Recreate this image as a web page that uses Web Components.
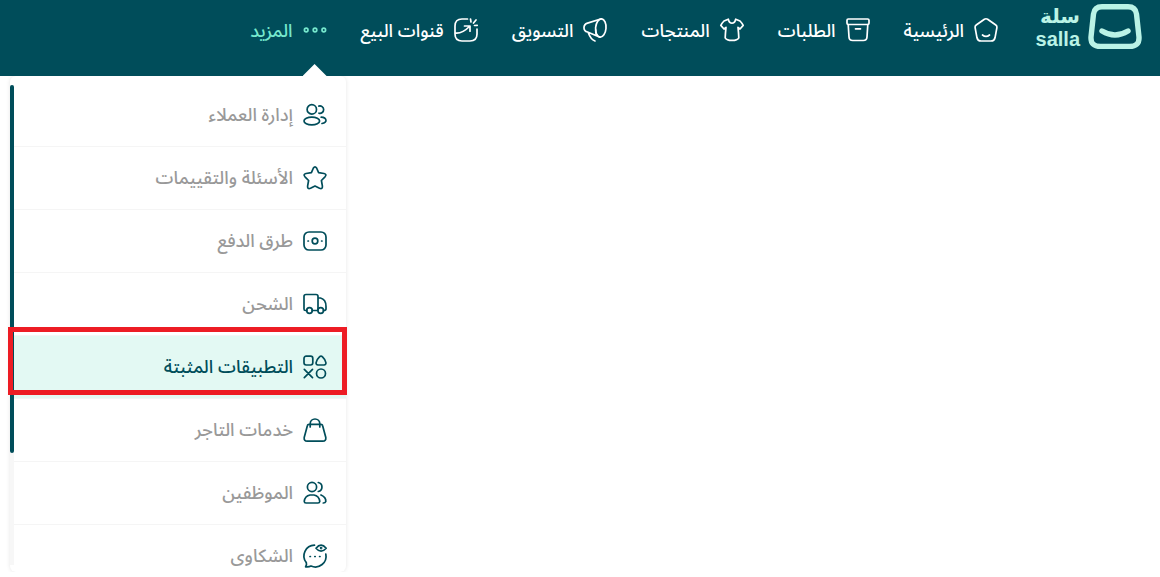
<!DOCTYPE html>
<html lang="ar" dir="rtl">
<head>
<meta charset="UTF-8">
<meta name="viewport" content="width=device-width, initial-scale=1">
<title>سلة</title>
<style>
  :root {
    --teal: #004d5a;
    --mint: #baf3e6;
    --accent: #76e8cd;
    --muted: #999;
    --active-bg: #e3f9f3;
    --line: #f5f5f5;
    --mark: #ed1c24;
  }
  body {
    margin: 0;
    background: #fff;
    font-family: "Noto Sans Arabic", "DejaVu Sans", sans-serif;
    font-size: 18px;
    font-weight: 500;
    line-height: 24px;
  }
</style>
</head>
<body>
<top-bar>
  <salla-logo slot="logo"></salla-logo>
  <nav-link icon="home">الرئيسية</nav-link>
  <nav-link icon="box">الطلبات</nav-link>
  <nav-link icon="shirt">المنتجات</nav-link>
  <nav-link icon="megaphone">التسويق</nav-link>
  <nav-link icon="channels">قنوات البيع</nav-link>
  <nav-link icon="more" active>المزيد</nav-link>
</top-bar>
<more-menu>
  <menu-item icon="customers">إدارة العملاء</menu-item>
  <menu-item icon="star">الأسئلة والتقييمات</menu-item>
  <menu-item icon="payment">طرق الدفع</menu-item>
  <menu-item icon="truck">الشحن</menu-item>
  <menu-item icon="apps" active>التطبيقات المثبتة</menu-item>
  <menu-item icon="bag">خدمات التاجر</menu-item>
  <menu-item icon="staff">الموظفين</menu-item>
  <menu-item icon="complaints">الشكاوى</menu-item>
</more-menu>

<script>
const ICONS = {
  home: '<path d="M10.4 1.2Q12 .3 13.6 1.2L21.8 7Q23.2 8 22.9 9.7L21 19.8Q20.3 23 17 23H7Q3.7 23 3 19.8L1.1 9.7Q.8 8 2.2 7Z"/><path d="M8.5 17Q12 19.8 15.5 17"/>',
  box: '<rect x="1" y="1" width="22" height="5.5" rx="1.3"/><path d="M2.2 6.5 3 19Q3.2 22.5 6.7 22.5H17.3Q20.8 22.5 21 19L21.8 6.5M9.5 10.8H14.5"/>',
  shirt: '<path d="M8.3 1.2Q9.3 5.2 12 5.2T15.7 1.2L20 3Q22 5 23.2 7.4L20 11 18 9.4Q18.6 15 18.8 19.8 17.5 22.4 12 22.4T5.2 19.8Q5.4 15 6 9.4L4 11 .8 7.4Q2 5 4 3Z"/>',
  megaphone: '<ellipse cx="17.8" cy="10" rx="5.2" ry="9.2" transform="rotate(5 17.8 10)"/><path d="M18.5 .8 4.5 5.1C-.2 6.7-.2 12.6 4.5 14L17 19.2M12.8 12Q12.3 14.5 14 17.5M5.2 14.5Q7.7 21.5 12 23"/>',
  channels: '<path d="M13.5 1H8Q1 1 1 8V16Q1 23 8 23H16Q23 23 23 16V11M1 15C7 15.8 11.5 12.5 15.4 8.5M10.5 8H16V13.2M16.5 1 17 4M22 2 19.5 5M23.2 7.3 20.5 7.5"/>',
  more: '<circle cx="3.2" cy="12" r="1.8"/><circle cx="12" cy="12" r="1.8"/><circle cx="20.8" cy="12" r="1.8"/>',
  customers: '<circle cx="8.8" cy="6.4" r="4.7"/><ellipse cx="8.8" cy="18" rx="7.8" ry="3.9"/><path d="M15.8 3.1A3.7 3.7 0 1 1 16 10.2M18.2 14.2C23.8 14.5 25 19.6 19 20.5"/>',
  star: '<path d="M10.4 2Q12 -.4 13.6 2L15.6 6.7 21 7.5Q24.2 8.4 22 10.8L18.4 14.5 19.4 20.2Q19.6 23.6 16.5 22.3L12 20 7.5 22.3Q4.4 23.6 4.6 20.2L5.6 14.5 2 10.8Q-.2 8.4 3 7.5L8.4 6.7Z"/>',
  payment: '<rect x="1" y="3" width="22" height="18" rx="5"/><circle cx="12" cy="12" r="2.8"/><path d="M5 12H5.4M18.6 12H19"/>',
  truck: '<path d="M3.8 18.5H2.5Q1 18.5 1 17V4.5Q1 2.5 3 2.5H13Q15 2.5 15 4.5V17M9.2 18.5H14.8M15 6H17.5C21.5 7 23 10 23 14.5V17Q23 18.5 20.5 18.5"/><circle cx="6.5" cy="18.5" r="2.8"/><circle cx="17.7" cy="18.5" r="2.8"/>',
  apps: '<rect x="1" y="1.2" width="8.8" height="8.8" rx="2.2"/><path d="M16.7 1.7Q18 .4 19.3 1.7 22 4.2 22.9 7.6 23.2 9.8 21 10H15Q12.8 9.8 13.1 7.6 14 4.2 16.7 1.7ZM1.3 14.4 9.5 22.6M9.5 14.4 1.3 22.6"/><circle cx="18" cy="18.5" r="4.5"/>',
  bag: '<path d="M4.5 7.2Q4.7 6.3 6 6.3H18Q19.3 6.3 19.5 7.2L22.8 19.5Q23.2 23 19.8 23.2H4.2Q.8 23 1.2 19.5ZM7.2 9V5.8A4.8 4.8 0 0 1 16.8 5.8V9"/>',
  staff: '<circle cx="9" cy="6" r="4.6"/><path d="M7 14H11Q16 15 16.8 20.3 16.5 22 15 22H3Q1.3 22 1.2 20.3 2 15 7 14ZM15.3 1.5A4.6 4.6 0 0 1 15.3 10.5M18 14C21.5 15.5 23 18 22.8 20.5Q22.3 22 20.3 22"/>',
  complaints: '<path d="M11.5 1.2A10.7 10.7 0 0 0 3.3 18.6Q4 20.8 2.6 22.8 5.8 23.2 8 22A10.7 10.7 0 0 0 22.8 10M7 12.5H7.4M11.8 12.5H12.2M16.6 12.5H17M13 4.2Q18 -2 23.2 4.2 18 10 13 4.2Z"/><circle cx="18.1" cy="4.1" r=".5"/>'
};

class UiIcon extends HTMLElement {
  connectedCallback() {
    this.attachShadow({ mode: 'open' });
    this.shadowRoot.innerHTML = `
      <style>
        :host { display: block; flex: none; width: 24px; height: 24px; }
        svg {
          display: block;
          overflow: visible;
          fill: none;
          stroke: currentColor;
          stroke-width: 1.7;
          stroke-linecap: round;
          stroke-linejoin: round;
        }
      </style>
      <svg width="24" height="24" viewBox="0 0 24 24" aria-hidden="true">${ICONS[this.getAttribute('name')]}</svg>
    `;
  }
}

class SallaLogo extends HTMLElement {
  connectedCallback() {
    this.attachShadow({ mode: 'open' });
    this.shadowRoot.innerHTML = `
      <style>
        :host { display: block; }
        a {
          display: flex;
          gap: 8px;
          color: var(--mint);
          text-decoration: none;
        }
        svg { display: block; }
        .name {
          display: flex;
          flex-direction: column;
          align-items: flex-start;
          width: 46px;
        }
        .ar { font: bold 20px/24px "DejaVu Sans", sans-serif; }
        .en { font: bold 20px/22px "Liberation Sans", sans-serif; }
      </style>
      <a href="#">
        <svg width="54" height="46" viewBox="0 0 54 46" fill="none" stroke="currentColor" stroke-width="5.4" stroke-linecap="round" aria-hidden="true">
          <path d="M14 2.8H40Q47.5 2.8 48.5 10L51 33Q51.5 42.4 41.5 42.4H12.5Q2.5 42.4 3 33L5.5 10Q6.5 2.8 14 2.8Z"/>
          <path d="M14 27Q27 35 40 27"/>
        </svg>
        <span class="name"><span class="ar">سلة</span><span class="en" dir="ltr">salla</span></span>
      </a>
    `;
  }
}

class TopBar extends HTMLElement {
  connectedCallback() {
    this.attachShadow({ mode: 'open' });
    this.shadowRoot.innerHTML = `
      <style>
        :host { display: block; background: var(--teal); }
        header {
          display: flex;
          gap: 36px;
          height: 76px;
          padding: 0 18px;
        }
        ::slotted(salla-logo) { padding-top: 4px; }
        nav { display: flex; gap: 34px; }
      </style>
      <header>
        <slot name="logo"></slot>
        <nav><slot></slot></nav>
      </header>
    `;
  }
}

class NavLink extends HTMLElement {
  connectedCallback() {
    this.attachShadow({ mode: 'open' });
    this.shadowRoot.innerHTML = `
      <style>
        :host { display: block; position: relative; color: #fff; }
        :host([active]) { color: var(--accent); }
        a {
          display: flex;
          align-items: center;
          gap: 10px;
          height: 60px;
          color: inherit;
          text-decoration: none;
          white-space: nowrap;
        }
        span { padding-top: 2px; }
        /* pointer that joins the open menu to its link */
        :host([active])::after {
          content: "";
          position: absolute;
          bottom: 0;
          right: 0;
          width: 24px;
          height: 12px;
          background: #fff;
          clip-path: polygon(50% 0, 100% 100%, 0 100%);
        }
      </style>
      <a href="#"><ui-icon name="${this.getAttribute('icon')}"></ui-icon><span><slot></slot></span></a>
    `;
  }
}

class MoreMenu extends HTMLElement {
  connectedCallback() {
    this.attachShadow({ mode: 'open' });
    this.shadowRoot.innerHTML = `
      <style>
        :host {
          display: flex;
          width: 336px;
          height: 496px;
          margin-right: auto;
          margin-left: 10px;
          background: #fff;
          border-radius: 6px;
          box-shadow: 0 0 4px rgba(0, 0, 0, 0.1);
          overflow-x: visible;
          overflow-y: clip;
          clip-path: inset(0 -6px 0 -6px);
        }
        nav { flex: 1; padding-top: 8px; }
        .track {
          width: 4px;
          margin: 9px 0 7px;
          background: #f7f7f7;
        }
        .thumb {
          height: 368px;
          border-radius: 2px;
          background: var(--teal);
        }
      </style>
      <nav><slot></slot></nav>
      <div class="track"><div class="thumb"></div></div>
    `;
  }
}

class MenuItem extends HTMLElement {
  connectedCallback() {
    this.attachShadow({ mode: 'open' });
    this.shadowRoot.innerHTML = `
      <style>
        :host {
          display: block;
          color: var(--muted);
          border-bottom: 1px solid var(--line);
        }
        :host([active]) {
          position: relative;
          background: var(--active-bg);
          color: var(--teal);
        }
        /* frame drawn over the row, the panel edge and the scrollbar */
        :host([active])::after {
          content: "";
          position: absolute;
          inset: -9px -1px 3px -6px;
          border: 5px solid var(--mark);
          pointer-events: none;
        }
        a {
          display: flex;
          align-items: center;
          gap: 10px;
          height: 62px;
          padding: 0 19px;
          color: inherit;
          text-decoration: none;
        }
        ui-icon { color: var(--teal); }
      </style>
      <a href="#"><ui-icon name="${this.getAttribute('icon')}"></ui-icon><slot></slot></a>
    `;
  }
}

customElements.define('ui-icon', UiIcon);
customElements.define('salla-logo', SallaLogo);
customElements.define('top-bar', TopBar);
customElements.define('nav-link', NavLink);
customElements.define('more-menu', MoreMenu);
customElements.define('menu-item', MenuItem);
</script>
</body>
</html>
